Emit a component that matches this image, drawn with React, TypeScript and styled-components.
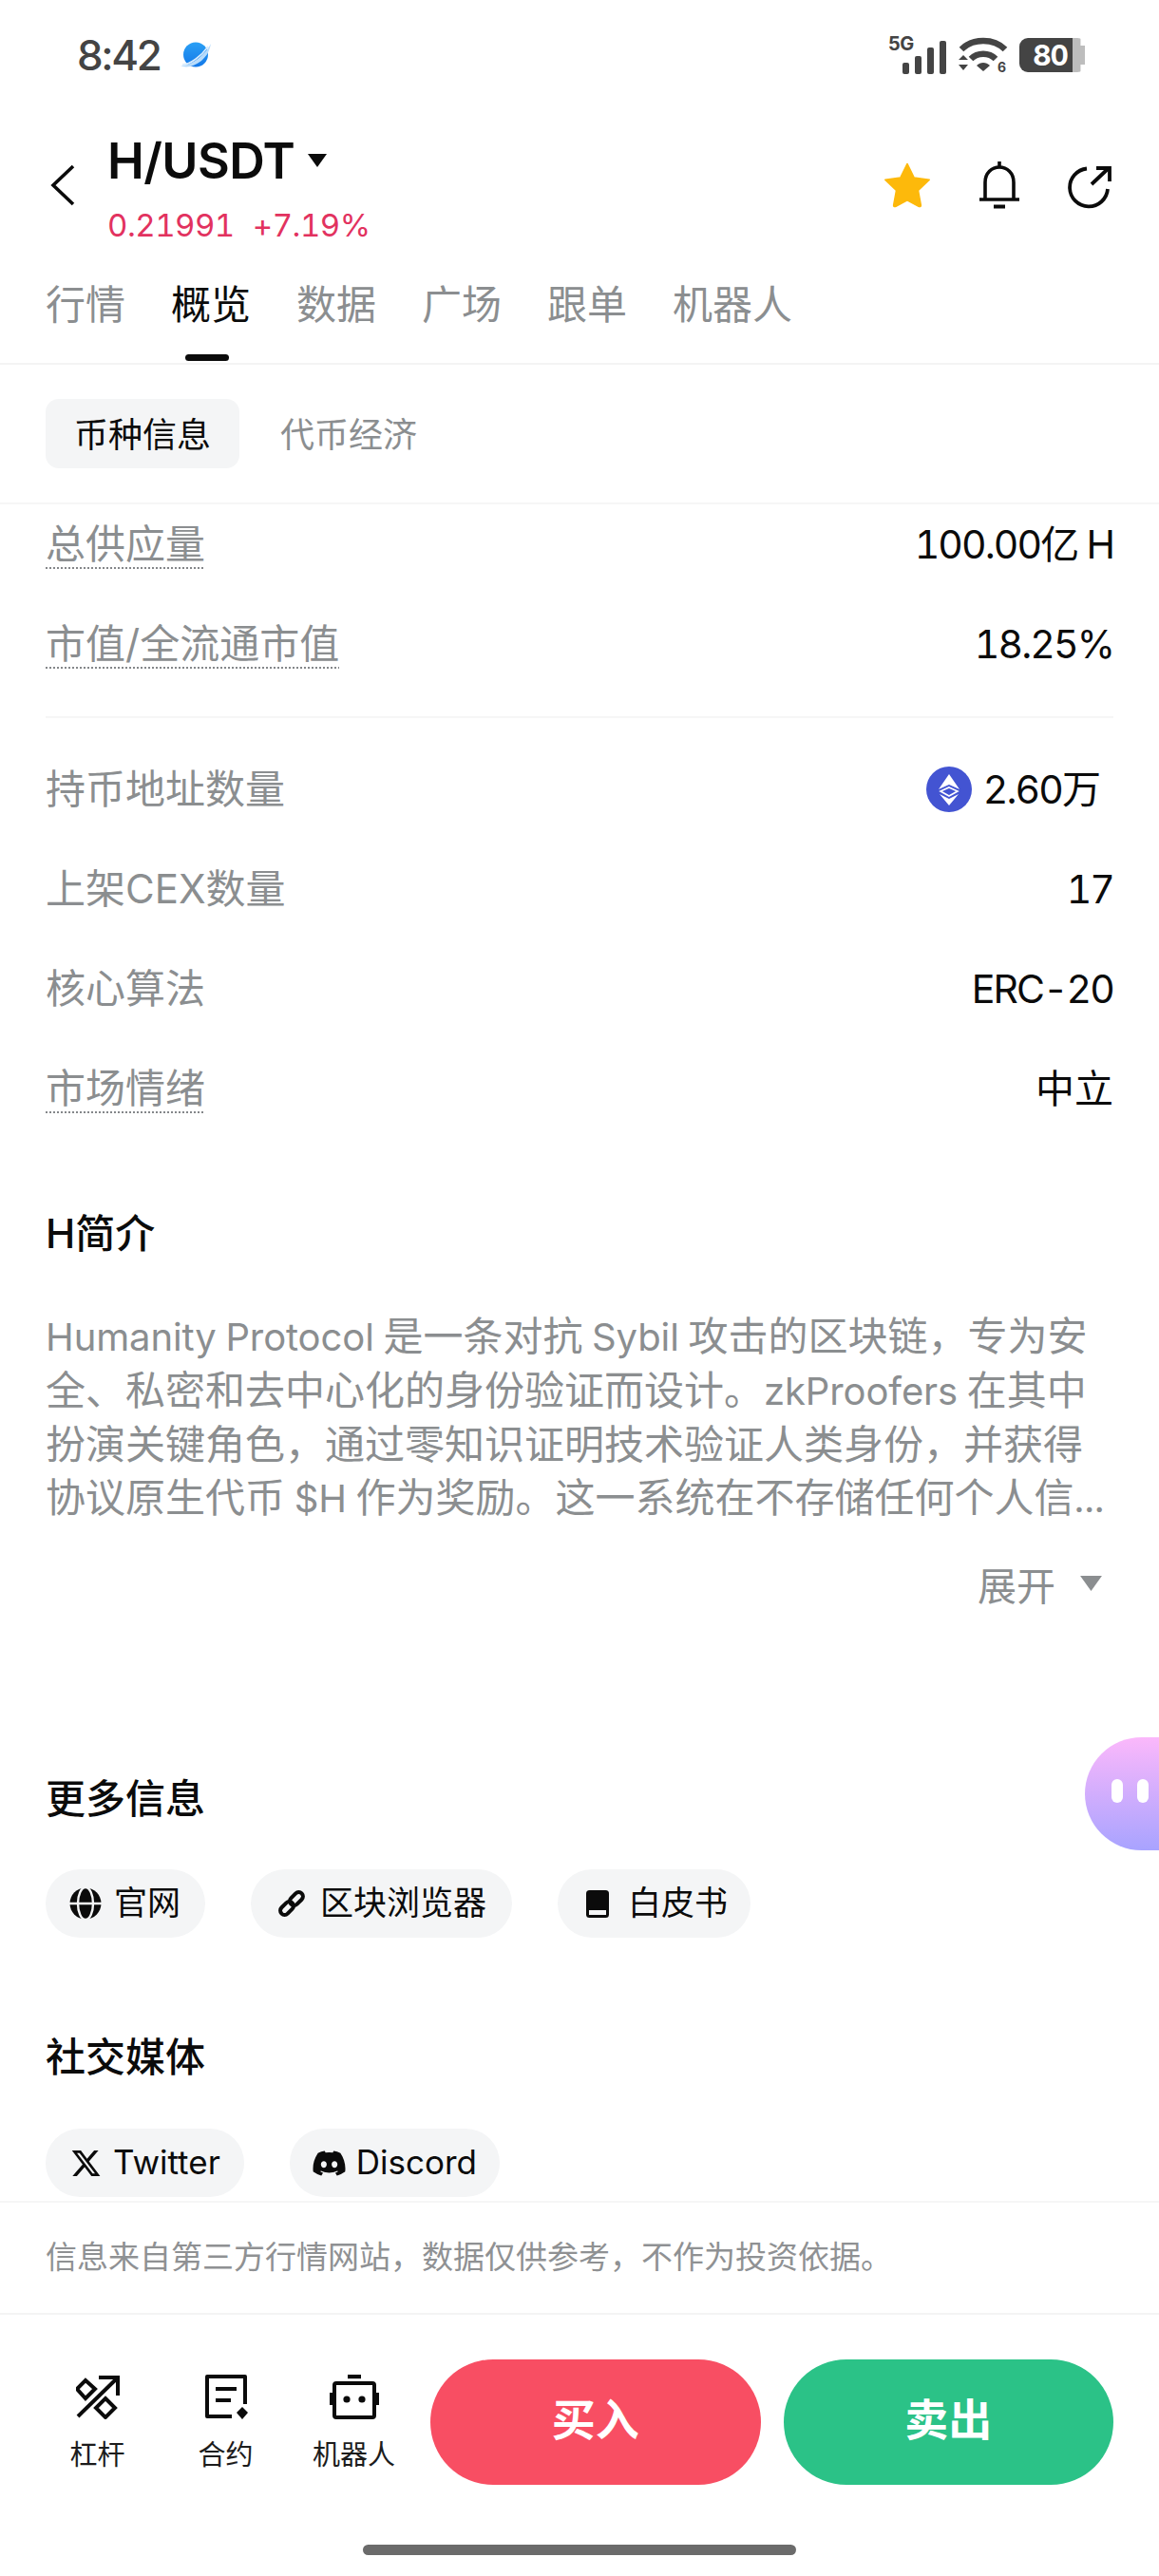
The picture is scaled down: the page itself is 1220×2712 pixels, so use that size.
import React from 'react';
import styled, { createGlobalStyle } from 'styled-components';
import { FaDiscord, FaXTwitter } from 'react-icons/fa6';

const GlobalStyle = createGlobalStyle`
  html, body { margin: 0; padding: 0; background: #fff; }
  body {
    font-family: Inter, "Noto Sans CJK SC", sans-serif;
    font-variant-numeric: tabular-nums;
    color: #0b0b0b;
  }
  * { box-sizing: border-box; }
`;

const Page = styled.div`
  position: relative;
  width: 1220px;
  height: 2712px;
  overflow: hidden;
  background: #fff;
`;

const StatusBar = styled.div`
  height: 116px;
  display: flex;
  align-items: center;
  justify-content: space-between;
  padding: 0 78px 0 81px;
`;

const StatusLeft = styled.div`
  display: flex;
  align-items: center;
  gap: 22px;
`;

const Time = styled.span`
  font-size: 44px;
  font-weight: 500;
  letter-spacing: -2.4px;
  font-variant-numeric: normal;
  color: #444;
  line-height: 50px;
`;

const StatusRight = styled.div`
  display: flex;
  align-items: center;
  gap: 12px;
`;

const Battery = styled.div`
  display: flex;
  align-items: center;
`;

const BatteryBody = styled.div`
  width: 56px;
  height: 36px;
  background: #444;
  border-radius: 9px 0 0 9px;
  color: #fff;
  font-size: 30px;
  font-weight: 700;
  letter-spacing: -1px;
  line-height: 36px;
  text-align: right;
  padding-right: 5px;
`;

const BatteryTip = styled.div`
  width: 13px;
  height: 36px;
  background: #bdbdbd;
  border-radius: 0 8px 8px 0;
  clip-path: polygon(0 0, 65% 0, 65% 22%, 100% 22%, 100% 78%, 65% 78%, 65% 100%, 0 100%);
`;

const Header = styled.header`
  height: 150px;
  display: flex;
  padding: 0 50px 0 53px;
`;

const BackButton = styled.div`
  width: 60px;
  margin-top: 57px;
`;

const TitleBlock = styled.div`
  flex: 1;
  padding-top: 23px;
`;

const TitleRow = styled.div`
  display: flex;
  align-items: center;
  gap: 14px;
  height: 60px;
  font-size: 52px;
  font-weight: 600;
  letter-spacing: -0.6px;
  color: #0b0b0b;
`;

const PriceRow = styled.div`
  display: flex;
  gap: 19px;
  margin-top: 18px;
  font-size: 33px;
  line-height: 40px;
  letter-spacing: -0.5px;
  color: #e2325f;
`;

const HeaderActions = styled.div`
  display: flex;
  align-items: flex-start;
  gap: 50px;
  margin-top: 54px;
`;

const Tabs = styled.nav`
  height: 118px;
  display: flex;
  gap: 48px;
  padding: 0 48px;
  border-bottom: 2px solid #f4f4f4;
`;

const Tab = styled.div<{ $active?: boolean }>`
  position: relative;
  height: 116px;
  padding-top: 26px;
  font-size: 42px;
  line-height: 58px;
  color: ${(p) => (p.$active ? '#0b0b0b' : '#8b8e90')};
`;

const TabMark = styled.div`
  position: absolute;
  left: 15px;
  bottom: 2px;
  width: 46px;
  height: 7px;
  border-radius: 4px;
  background: #0b0b0b;
`;

const SubTabs = styled.div`
  height: 147px;
  display: flex;
  gap: 43px;
  padding: 36px 48px 0;
  border-bottom: 2px solid #f6f6f6;
`;

const SubTab = styled.div<{ $active?: boolean }>`
  height: 73px;
  padding: 0 ${(p) => (p.$active ? '30px' : '0')};
  border-radius: 14px;
  background: ${(p) => (p.$active ? '#f4f5f6' : 'transparent')};
  color: ${(p) => (p.$active ? '#0b0b0b' : '#8b8e90')};
  font-size: 36px;
  line-height: 76px;
`;

const Content = styled.main`
  padding: 0 48px;
  height: 1786px;
`;

const RowGroup = styled.div<{ $top: number }>`
  display: flex;
  flex-direction: column;
  gap: 63px;
  padding-top: ${(p) => p.$top}px;
`;

const Row = styled.div`
  height: 42px;
  display: flex;
  align-items: center;
  justify-content: space-between;
`;

const Label = styled.span<{ $dotted?: boolean }>`
  font-size: 42px;
  line-height: 42px;
  color: #8b8e90;
  ${(p) =>
    p.$dotted &&
    `height: 47px;
     margin-top: 5px;
     background: repeating-linear-gradient(90deg, #84878a 0 2px, transparent 2px 4px) 0 45px / 100% 2px no-repeat;`}
`;

const Value = styled.span<{ $cjk?: boolean }>`
  display: flex;
  align-items: center;
  gap: 12px;
  font-size: 41px;
  letter-spacing: ${(p) => (p.$cjk ? '0' : '-1.9px')};
  line-height: 42px;
  color: #0b0b0b;
`;

const ValueInset = styled(Value)`
  margin-right: 15px;
`;

const Divider = styled.div`
  height: 2px;
  margin-top: 55px;
  background: #f6f6f6;
`;

const SectionTitle = styled.h2<{ $top: number }>`
  margin: ${(p) => p.$top}px 0 0;
  font-size: 42px;
  line-height: 56px;
  font-weight: 500;
  color: #0b0b0b;
`;

const Intro = styled.div`
  margin-top: 52px;
  font-size: 42px;
  line-height: 56px;
  color: #8b8e90;
`;

const IntroLine = styled.div`
  white-space: nowrap;
`;

const Latin = styled.span`
  font-size: 40px;
  letter-spacing: -0.1px;
  word-spacing: -1px;
`;

const Expand = styled.div`
  display: flex;
  align-items: center;
  justify-content: flex-end;
  gap: 26px;
  height: 56px;
  margin-top: 33px;
  padding-right: 12px;
  font-size: 41px;
  color: #8b8e90;
`;

const ChipRow = styled.div<{ $top: number }>`
  display: flex;
  gap: 48px;
  margin-top: ${(p) => p.$top}px;
`;

const Chip = styled.div<{ $left: number; $right: number; $gap: number; $lift: number }>`
  height: 72px;
  display: flex;
  align-items: center;
  gap: ${(p) => p.$gap}px;
  padding: 0 ${(p) => p.$right}px ${(p) => p.$lift}px ${(p) => p.$left}px;
  border-radius: 36px;
  background: #f4f5f6;
  font-size: 35px;
  color: #0b0b0b;

  svg {
    margin-top: ${(p) => p.$lift}px;
    flex-shrink: 0;
  }
`;

const Note = styled.div`
  height: 120px;
  display: flex;
  align-items: center;
  padding: 0 48px 6px;
  border-top: 2px solid #f6f6f6;
  border-bottom: 2px solid #f4f4f4;
  font-size: 33px;
  color: #8f9193;
`;

const BottomBar = styled.footer`
  display: flex;
  gap: 13px;
  padding: 47px 48px 0 35px;
`;

const Tools = styled.div`
  display: flex;
`;

const Tool = styled.div`
  width: 135px;
  padding-top: 16px;
  display: flex;
  flex-direction: column;
  align-items: center;
  font-size: 29px;
  color: #1c1c1c;
`;

const ToolLabel = styled.span`
  margin-top: 18px;
  line-height: 40px;
`;

const TradeButtons = styled.div`
  flex: 1;
  display: flex;
  gap: 24px;
`;

const TradeButton = styled.div<{ $color: string }>`
  flex: 1;
  height: 132px;
  display: flex;
  align-items: center;
  justify-content: center;
  padding-bottom: 12px;
  border-radius: 66px;
  background: ${(p) => p.$color};
  color: #fff;
  font-size: 46px;
  font-weight: 700;
`;

const HomeBar = styled.div`
  width: 456px;
  height: 11px;
  margin: 63px auto 0;
  border-radius: 6px;
  background: #6b6b6b;
`;

const Assistant = styled.div`
  position: absolute;
  top: 1829px;
  right: 0;
  width: 78px;
  height: 119px;
  display: flex;
  align-items: center;
  gap: 15px;
  padding: 0 0 6px 28px;
  border-radius: 60px 0 0 60px;
  background: linear-gradient(180deg, #fbb8fb 0%, #a8a3ff 100%);
`;

const AssistantEye = styled.div`
  width: 12px;
  height: 25px;
  border-radius: 6px;
  background: #fff;
`;

const PlanetIcon = () => (
  <svg width="32" height="28" viewBox="0 0 32 28">
    <defs>
      <linearGradient id="planet" x1="0" y1="0" x2="0" y2="1">
        <stop offset="0" stopColor="#2aa0f5" />
        <stop offset="1" stopColor="#1478e8" />
      </linearGradient>
    </defs>
    <circle cx="16" cy="13.5" r="13" fill="url(#planet)" />
    <path d="M0 25 C10 26 25 15 32 2 C30 12 27 15 22 20 C14 26 6 28 0 25 Z" fill="#b9dcfb" />
    <path d="M2 24 C10 24 22 15 29 5" fill="none" stroke="#d7ebfd" strokeWidth="1.6" />
  </svg>
);

const SignalIcon = () => (
  <svg width="62" height="48" viewBox="0 0 62 48">
    <text x="0" y="19" fontFamily="Inter, sans-serif" fontSize="20" fontWeight="700" letterSpacing="-0.6" fill="#444">
      5G
    </text>
    <rect x="15" y="32" width="7" height="12" rx="2" fill="#444" />
    <rect x="28" y="25" width="7" height="19" rx="2" fill="#444" />
    <rect x="41" y="16" width="7" height="28" rx="2" fill="#444" />
    <rect x="54" y="9" width="7" height="35" rx="2" fill="#444" />
  </svg>
);

const WifiIcon = () => (
  <svg width="52" height="44" viewBox="0 0 52 44">
    <path d="M3 16 C15 4 37 4 49 16" fill="none" stroke="#444" strokeWidth="6.5" />
    <path d="M13 26 C20 19 32 19 39 26" fill="none" stroke="#444" strokeWidth="6.5" />
    <path d="M19 33 C23 29 29 29 33 33 L26 39 Z" fill="#444" />
    <path d="M0 27 L5 22 L10 27 Z M0 32 L10 32 L5 38 Z" fill="#444" />
    <text x="41" y="40" fontFamily="Inter, sans-serif" fontSize="14" fontWeight="700" fill="#444">
      6
    </text>
  </svg>
);

const BackIcon = () => (
  <svg width="26" height="44" viewBox="0 0 26 44">
    <path d="M24 2 L3 22 L24 42" fill="none" stroke="#0b0b0b" strokeWidth="3.6" />
  </svg>
);

const Caret = ({ color, w, h }: { color: string; w: number; h: number }) => (
  <svg width={w} height={h} viewBox="0 0 20 14">
    <path d="M0 0 H20 L10 14 Z" fill={color} />
  </svg>
);

const StarIcon = () => (
  <svg width="50" height="50" viewBox="0 0 52 50">
    <path
      d="M26 1.5 L33.4 16.6 L50.2 19 L38 30.6 L41 47 Q41 49 38.5 48.3 L26 41.6 L13.5 48.3 Q11 49 11 47 L14 30.6 L1.8 19 L18.6 16.6 Z"
      fill="#fdb90b"
      stroke="#fdb90b"
      strokeWidth="1.5"
      strokeLinejoin="round"
    />
  </svg>
);

const BellIcon = () => (
  <svg width="44" height="50" viewBox="0 0 44 50">
    <path d="M7 40 V22 C7 12 14 6 22 6 C30 6 37 12 37 22 V40" fill="none" stroke="#0b0b0b" strokeWidth="3.6" />
    <path d="M22 0 V6" stroke="#0b0b0b" strokeWidth="3.6" />
    <path d="M1 40 H43" stroke="#0b0b0b" strokeWidth="3.6" />
    <path d="M16 47.5 H28" stroke="#0b0b0b" strokeWidth="4" />
  </svg>
);

const ShareIcon = () => (
  <svg width="46" height="50" viewBox="0 0 46 50">
    <path d="M20 7.5 A20 20 0 1 0 42 29" fill="none" stroke="#0b0b0b" strokeWidth="3.8" />
    <path d="M25 24 L43 7" stroke="#0b0b0b" strokeWidth="3.8" />
    <path d="M30 7 H44 V21" fill="none" stroke="#0b0b0b" strokeWidth="3.8" />
  </svg>
);

const EthBadge = () => (
  <svg width="48" height="48" viewBox="0 0 48 48">
    <circle cx="24" cy="24" r="24" fill="#4354d2" />
    <path d="M24 8 L35 24 L24 19 L13 24 Z" fill="#fff" />
    <path d="M24 22 L33 26 L24 31 L15 26 Z" fill="none" stroke="#fff" strokeWidth="1.6" />
    <path d="M14 29 L24 34 L34 29 L24 41 Z" fill="#fff" />
  </svg>
);

const GlobeIcon = () => (
  <svg width="34" height="34" viewBox="0 0 34 34">
    <circle cx="17" cy="17" r="16.5" fill="#0b0b0b" />
    <ellipse cx="17" cy="17" rx="8" ry="17" fill="#0b0b0b" stroke="#f4f5f6" strokeWidth="2.4" />
    <path d="M0 17 H34" stroke="#f4f5f6" strokeWidth="2.4" />
  </svg>
);

const LinkIcon = () => (
  <svg width="28" height="28" viewBox="0 0 28 28">
    <g fill="none" stroke="#0b0b0b" strokeWidth="4" transform="rotate(-45 14 14)">
      <rect x="-1" y="9.5" width="16" height="9" rx="4.5" />
      <rect x="13" y="9.5" width="16" height="9" rx="4.5" />
    </g>
  </svg>
);

const BookIcon = () => (
  <svg width="24" height="29" viewBox="0 0 24 29">
    <rect x="0" y="0" width="24" height="29" rx="3.5" fill="#0b0b0b" />
    <rect x="3" y="21" width="18" height="5" fill="#f4f5f6" />
  </svg>
);

const LeverageIcon = () => (
  <svg width="46" height="47" viewBox="0 0 46 47">
    <path d="M2 44 L42 5" stroke="#0b0b0b" strokeWidth="4" />
    <path d="M24 3 H44 V22" fill="none" stroke="#0b0b0b" strokeWidth="4" />
    <path d="M10 6 L20 15 L10 25 L1 15 Z" fill="none" stroke="#0b0b0b" strokeWidth="4" />
    <path d="M31 25 L41 35 L31 45 L21 35 Z" fill="none" stroke="#0b0b0b" strokeWidth="4" />
  </svg>
);

const ContractIcon = () => (
  <svg width="46" height="47" viewBox="0 0 46 47">
    <path d="M29 44 H3 V2 H43 V31" fill="none" stroke="#0b0b0b" strokeWidth="4" strokeLinejoin="round" />
    <path d="M12 15 H34 M12 27 H28" stroke="#0b0b0b" strokeWidth="4" />
    <path d="M40 34 L46 40 L40 47 L34 40 Z" fill="#0b0b0b" />
  </svg>
);

const RobotIcon = () => (
  <svg width="52" height="47" viewBox="0 0 52 47">
    <path d="M19 2 H33" stroke="#0b0b0b" strokeWidth="4.4" />
    <rect x="5" y="9" width="42" height="36" rx="2" fill="none" stroke="#0b0b0b" strokeWidth="4" />
    <path d="M2 19 V32 M50 19 V32" stroke="#0b0b0b" strokeWidth="4" />
    <circle cx="18" cy="26" r="3.6" fill="#0b0b0b" />
    <circle cx="34" cy="26" r="3.6" fill="#0b0b0b" />
  </svg>
);

export default function App() {
  return (
    <Page>
      <GlobalStyle />
      <StatusBar>
        <StatusLeft>
          <Time>8:42</Time>
          <PlanetIcon />
        </StatusLeft>
        <StatusRight>
          <SignalIcon />
          <WifiIcon />
          <Battery>
            <BatteryBody>80</BatteryBody>
            <BatteryTip />
          </Battery>
        </StatusRight>
      </StatusBar>

      <Header>
        <BackButton>
          <BackIcon />
        </BackButton>
        <TitleBlock>
          <TitleRow>
            H/USDT
            <Caret color="#0b0b0b" w={20} h={14} />
          </TitleRow>
          <PriceRow>
            <span>0.21991</span>
            <span>+7.19%</span>
          </PriceRow>
        </TitleBlock>
        <HeaderActions>
          <StarIcon />
          <BellIcon />
          <ShareIcon />
        </HeaderActions>
      </Header>

      <Tabs>
        <Tab>行情</Tab>
        <Tab $active>
          概览
          <TabMark />
        </Tab>
        <Tab>数据</Tab>
        <Tab>广场</Tab>
        <Tab>跟单</Tab>
        <Tab>机器人</Tab>
      </Tabs>

      <SubTabs>
        <SubTab $active>币种信息</SubTab>
        <SubTab>代币经济</SubTab>
      </SubTabs>

      <Content>
        <RowGroup $top={21}>
          <Row>
            <Label $dotted>总供应量</Label>
            <Value>100.00亿 H</Value>
          </Row>
          <Row>
            <Label $dotted>市值/全流通市值</Label>
            <Value>18.25%</Value>
          </Row>
        </RowGroup>
        <Divider />
        <RowGroup $top={54}>
          <Row>
            <Label>持币地址数量</Label>
            <ValueInset>
              <EthBadge />
              2.60万
            </ValueInset>
          </Row>
          <Row>
            <Label>上架CEX数量</Label>
            <Value>17</Value>
          </Row>
          <Row>
            <Label>核心算法</Label>
            <Value>ERC-20</Value>
          </Row>
          <Row>
            <Label $dotted>市场情绪</Label>
            <Value $cjk>中立</Value>
          </Row>
        </RowGroup>

        <SectionTitle $top={104}>H简介</SectionTitle>
        <Intro>
          <IntroLine>
            <Latin>Humanity Protocol </Latin>是一条对抗<Latin> Sybil </Latin>攻击的区块链，专为安
          </IntroLine>
          <IntroLine>
            全、私密和去中心化的身份验证而设计。<Latin>zkProofers </Latin>在其中
          </IntroLine>
          <IntroLine>扮演关键角色，通过零知识证明技术验证人类身份，并获得</IntroLine>
          <IntroLine>
            协议原生代币<Latin> $H </Latin>作为奖励。这一系统在不存储任何个人信<Latin>...</Latin>
          </IntroLine>
        </Intro>
        <Expand>
          展开
          <Caret color="#8b8e90" w={23} h={16} />
        </Expand>

        <SectionTitle $top={171}>更多信息</SectionTitle>
        <ChipRow $top={46}>
          <Chip $left={25} $right={26} $gap={13} $lift={8}>
            <GlobeIcon />
            官网
          </Chip>
          <Chip $left={29} $right={27} $gap={16} $lift={8}>
            <LinkIcon />
            区块浏览器
          </Chip>
          <Chip $left={30} $right={24} $gap={20} $lift={8}>
            <BookIcon />
            白皮书
          </Chip>
        </ChipRow>

        <SectionTitle $top={98}>社交媒体</SectionTitle>
        <ChipRow $top={47}>
          <Chip $left={26} $right={25} $gap={12} $lift={3}>
            <FaXTwitter size={33} />
            Twitter
          </Chip>
          <Chip $left={23} $right={24} $gap={10} $lift={3}>
            <FaDiscord size={37} />
            Discord
          </Chip>
        </ChipRow>
      </Content>

      <Note>信息来自第三方行情网站，数据仅供参考，不作为投资依据。</Note>

      <BottomBar>
        <Tools>
          <Tool>
            <LeverageIcon />
            <ToolLabel>杠杆</ToolLabel>
          </Tool>
          <Tool>
            <ContractIcon />
            <ToolLabel>合约</ToolLabel>
          </Tool>
          <Tool>
            <RobotIcon />
            <ToolLabel>机器人</ToolLabel>
          </Tool>
        </Tools>
        <TradeButtons>
          <TradeButton $color="#f84e63">买入</TradeButton>
          <TradeButton $color="#2bc287">卖出</TradeButton>
        </TradeButtons>
      </BottomBar>
      <HomeBar />

      <Assistant>
        <AssistantEye />
        <AssistantEye />
      </Assistant>
    </Page>
  );
}
